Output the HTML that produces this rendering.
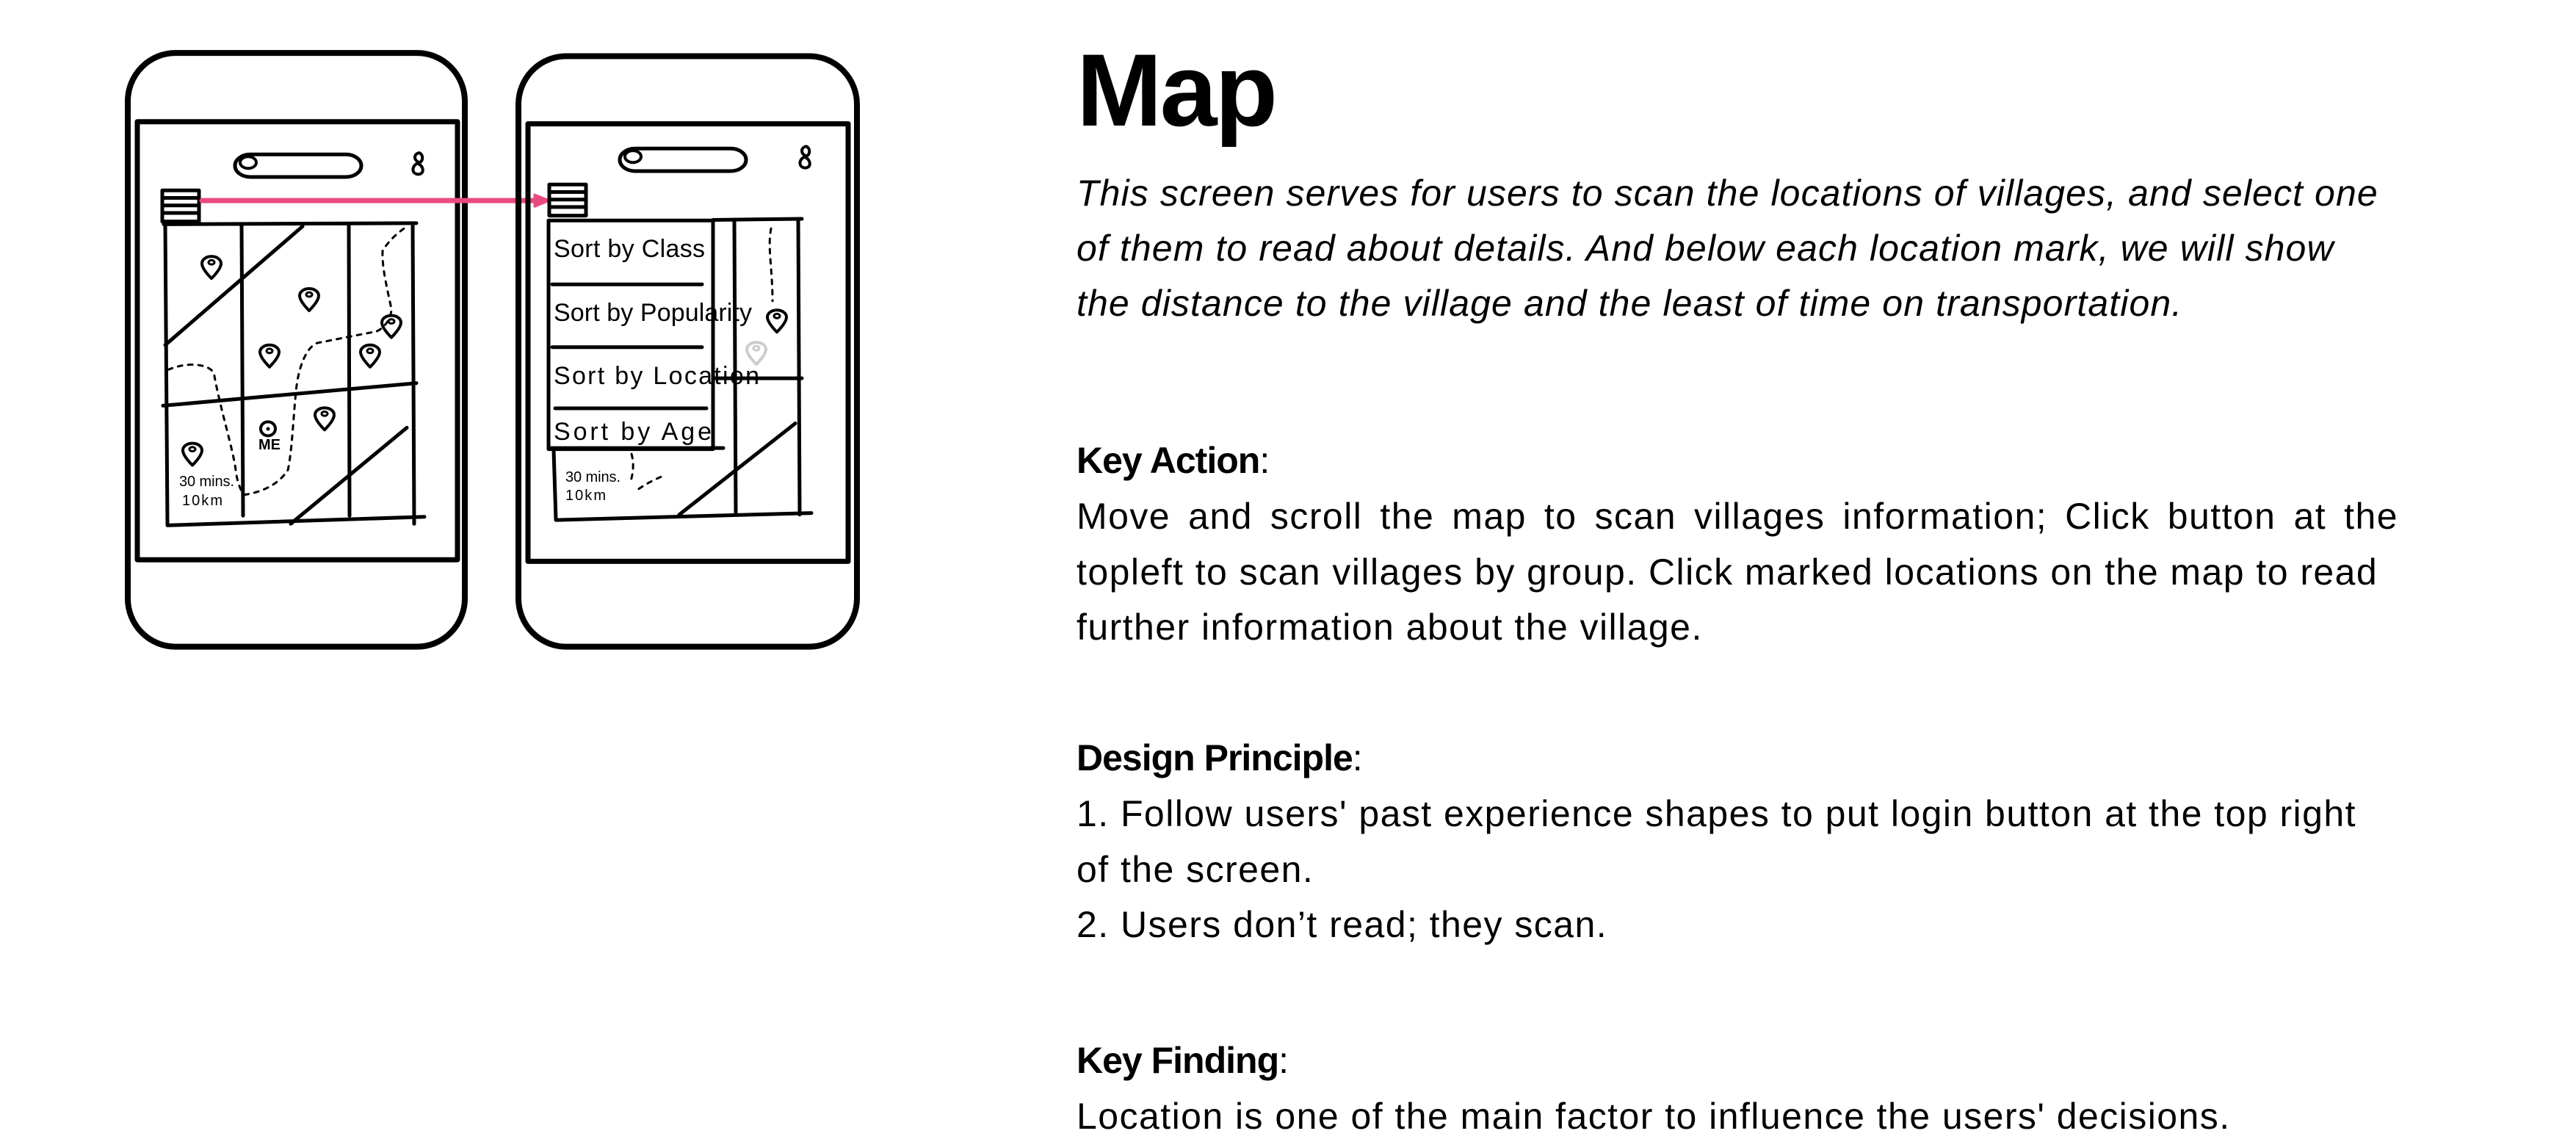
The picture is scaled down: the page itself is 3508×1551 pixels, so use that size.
<!DOCTYPE html>
<html><head><meta charset="utf-8"><style>
html,body{margin:0;padding:0;background:#fff;}
body{width:3508px;height:1551px;position:relative;overflow:hidden;font-family:"Liberation Sans",sans-serif;color:#000;}
.t{position:absolute;left:1466px;white-space:nowrap;}
.h{font-size:140px;font-weight:bold;top:42px;letter-spacing:-3px;}
.i{font-style:italic;font-size:50px;letter-spacing:1.1px;}
.b{font-size:50px;letter-spacing:1.45px;}
.k{font-size:50px;font-weight:bold;letter-spacing:-1px;}
.j{width:1800px;text-align:justify;text-align-last:justify;}
svg g.s *{vector-effect:non-scaling-stroke;}
</style></head><body>
<svg width="1300" height="1000" style="position:absolute;left:0;top:0" viewBox="0 0 1300 1000" fill="none" stroke="#000" stroke-linecap="round" stroke-linejoin="round">
<defs>
<g id="pin"><path d="M0,38 C-10,24 -13,16 -13,10 A13,13 0 1 1 13,10 C13,16 10,24 0,38Z" stroke-width="4" vector-effect="non-scaling-stroke"/><circle cx="0" cy="8" r="4" stroke-width="3" vector-effect="non-scaling-stroke"/></g>
<g id="menu"><rect x="0" y="0" width="50" height="58" stroke-width="5" vector-effect="non-scaling-stroke"/><path d="M2,14H48M2,28H48M2,42H48" stroke-width="5" vector-effect="non-scaling-stroke"/></g>
</defs>
<g class="s" transform="translate(0,0.5) scale(1,0.731)">
<rect x="174" y="98" width="459" height="1106" rx="65" ry="90" stroke-width="8"/>
<rect x="187" y="226" width="436" height="816" stroke-width="7"/>
<rect x="320" y="287" width="172" height="42" rx="21" stroke-width="5"/>
<circle cx="338" cy="302" r="11" stroke-width="4"/>
<path d="M571,284c-8,2-8,14 0,18c-10,4-12,20-2,22c10,0 8-16 0-20c8-4 8-16 2-20z" stroke-width="4"/>
<use href="#menu" x="221" y="354"/>
<path d="M223,417L567,415M225,417L228,975M329,417L331,960M475,417L476,960M562,415L564,975M222,755L567,713M228,978L578,962M225,642L412,421M396,975L554,796" stroke-width="5"/>
<path d="M229,688C260,670 292,680 292,700C300,760 318,840 321,875C323,900 330,920 333,921C360,915 380,900 392,875C398,840 400,760 404,717C410,660 425,640 433,638C470,628 500,620 512,617C525,610 533,590 533,575C528,540 520,500 521,467C530,445 545,430 554,421" stroke-width="3" stroke-dasharray="6 8"/>
<use href="#pin" x="288" y="480"/><use href="#pin" x="421" y="540"/><use href="#pin" x="533" y="590"/>
<use href="#pin" x="367" y="645"/><use href="#pin" x="504" y="645"/><use href="#pin" x="442" y="762"/><use href="#pin" x="262" y="828"/>
<ellipse cx="365" cy="798" rx="10" ry="13" stroke-width="4"/>
<path d="M275,373H735" stroke="#e84a7f" stroke-width="7"/>
<path d="M728,362L748,373L728,384Z" fill="#e84a7f" stroke="#e84a7f" stroke-width="3"/>
<rect x="706" y="104" width="461" height="1100" rx="65" ry="90" stroke-width="8"/>
<rect x="719" y="230" width="436" height="815" stroke-width="7"/>
<rect x="844" y="276" width="172" height="42" rx="21" stroke-width="5"/>
<circle cx="862" cy="291" r="11" stroke-width="4"/>
<path d="M1098,272c-8,2-8,14 0,18c-10,4-12,20-2,22c10,0 8-16 0-20c8-4 8-16 2-20z" stroke-width="4"/>
<use href="#menu" x="748" y="343"/>
<path d="M971,409L1092,407M1087,407L1089,958M1000,409L1002,958M754,838L757,968M757,968L1105,955M971,704L1058,704M1054,704L1092,704M925,958L1083,788" stroke-width="5"/>
<path d="M1050,425C1045,460 1052,500 1052,560M860,845C865,870 860,890 858,900M870,910C880,900 895,890 905,885" stroke-width="3" stroke-dasharray="6 8"/>
<use href="#pin" x="1058" y="580"/>
<g stroke="#ccc"><use href="#pin" x="1030" y="640"/><use href="#pin" x="895" y="625"/></g>
<rect x="747" y="410" width="224" height="426" stroke-width="5" fill="#fff"/>
<path d="M752,529L956,529M752,646L956,646M756,760L962,760M747,834L985,834" stroke-width="5"/>
</g>
<circle cx="365" cy="584" r="2.5" fill="#000" stroke="none"/>
<g fill="#000" stroke="none" font-family="Liberation Sans" font-size="20">
<text x="352" y="612" font-weight="bold">ME</text>
<text x="244" y="662" textLength="75">30 mins.</text>
<text x="248" y="688" textLength="55">10km</text>
<text x="770" y="656" textLength="75">30 mins.</text>
<text x="770" y="681" textLength="55">10km</text>
</g>
<g fill="#000" stroke="none" font-family="Liberation Sans" font-size="34">
<text x="754" y="350" textLength="206">Sort by Class</text>
<text x="754" y="437" textLength="270">Sort by Popularity</text>
<text x="754" y="523" textLength="280">Sort by Location</text>
<text x="754" y="599" textLength="215">Sort by Age</text>
</g>
</svg>
<div class="t h">Map</div>
<div class="t i" style="top:234px">This screen serves for users to scan the locations of villages, and select one</div>
<div class="t i" style="top:309px">of them to read about details. And below each location mark, we will show</div>
<div class="t i" style="top:384px">the distance to the village and the least of time on transportation.</div>
<div class="t k" style="top:598px">Key Action<span style="font-weight:normal">:</span></div>
<div class="t b j" style="top:674px">Move and scroll the map to scan villages information; Click button at the</div>
<div class="t b" style="top:750px">topleft to scan villages by group. Click marked locations on the map to read</div>
<div class="t b" style="top:825px">further information about the village.</div>
<div class="t k" style="top:1003px">Design Principle<span style="font-weight:normal">:</span></div>
<div class="t b" style="top:1079px">1. Follow users' past experience shapes to put login button at the top right</div>
<div class="t b" style="top:1155px">of the screen.</div>
<div class="t b" style="top:1230px">2. Users don’t read; they scan.</div>
<div class="t k" style="top:1415px">Key Finding<span style="font-weight:normal">:</span></div>
<div class="t b" style="top:1491px">Location is one of the main factor to influence the users' decisions.</div>
</body></html>
